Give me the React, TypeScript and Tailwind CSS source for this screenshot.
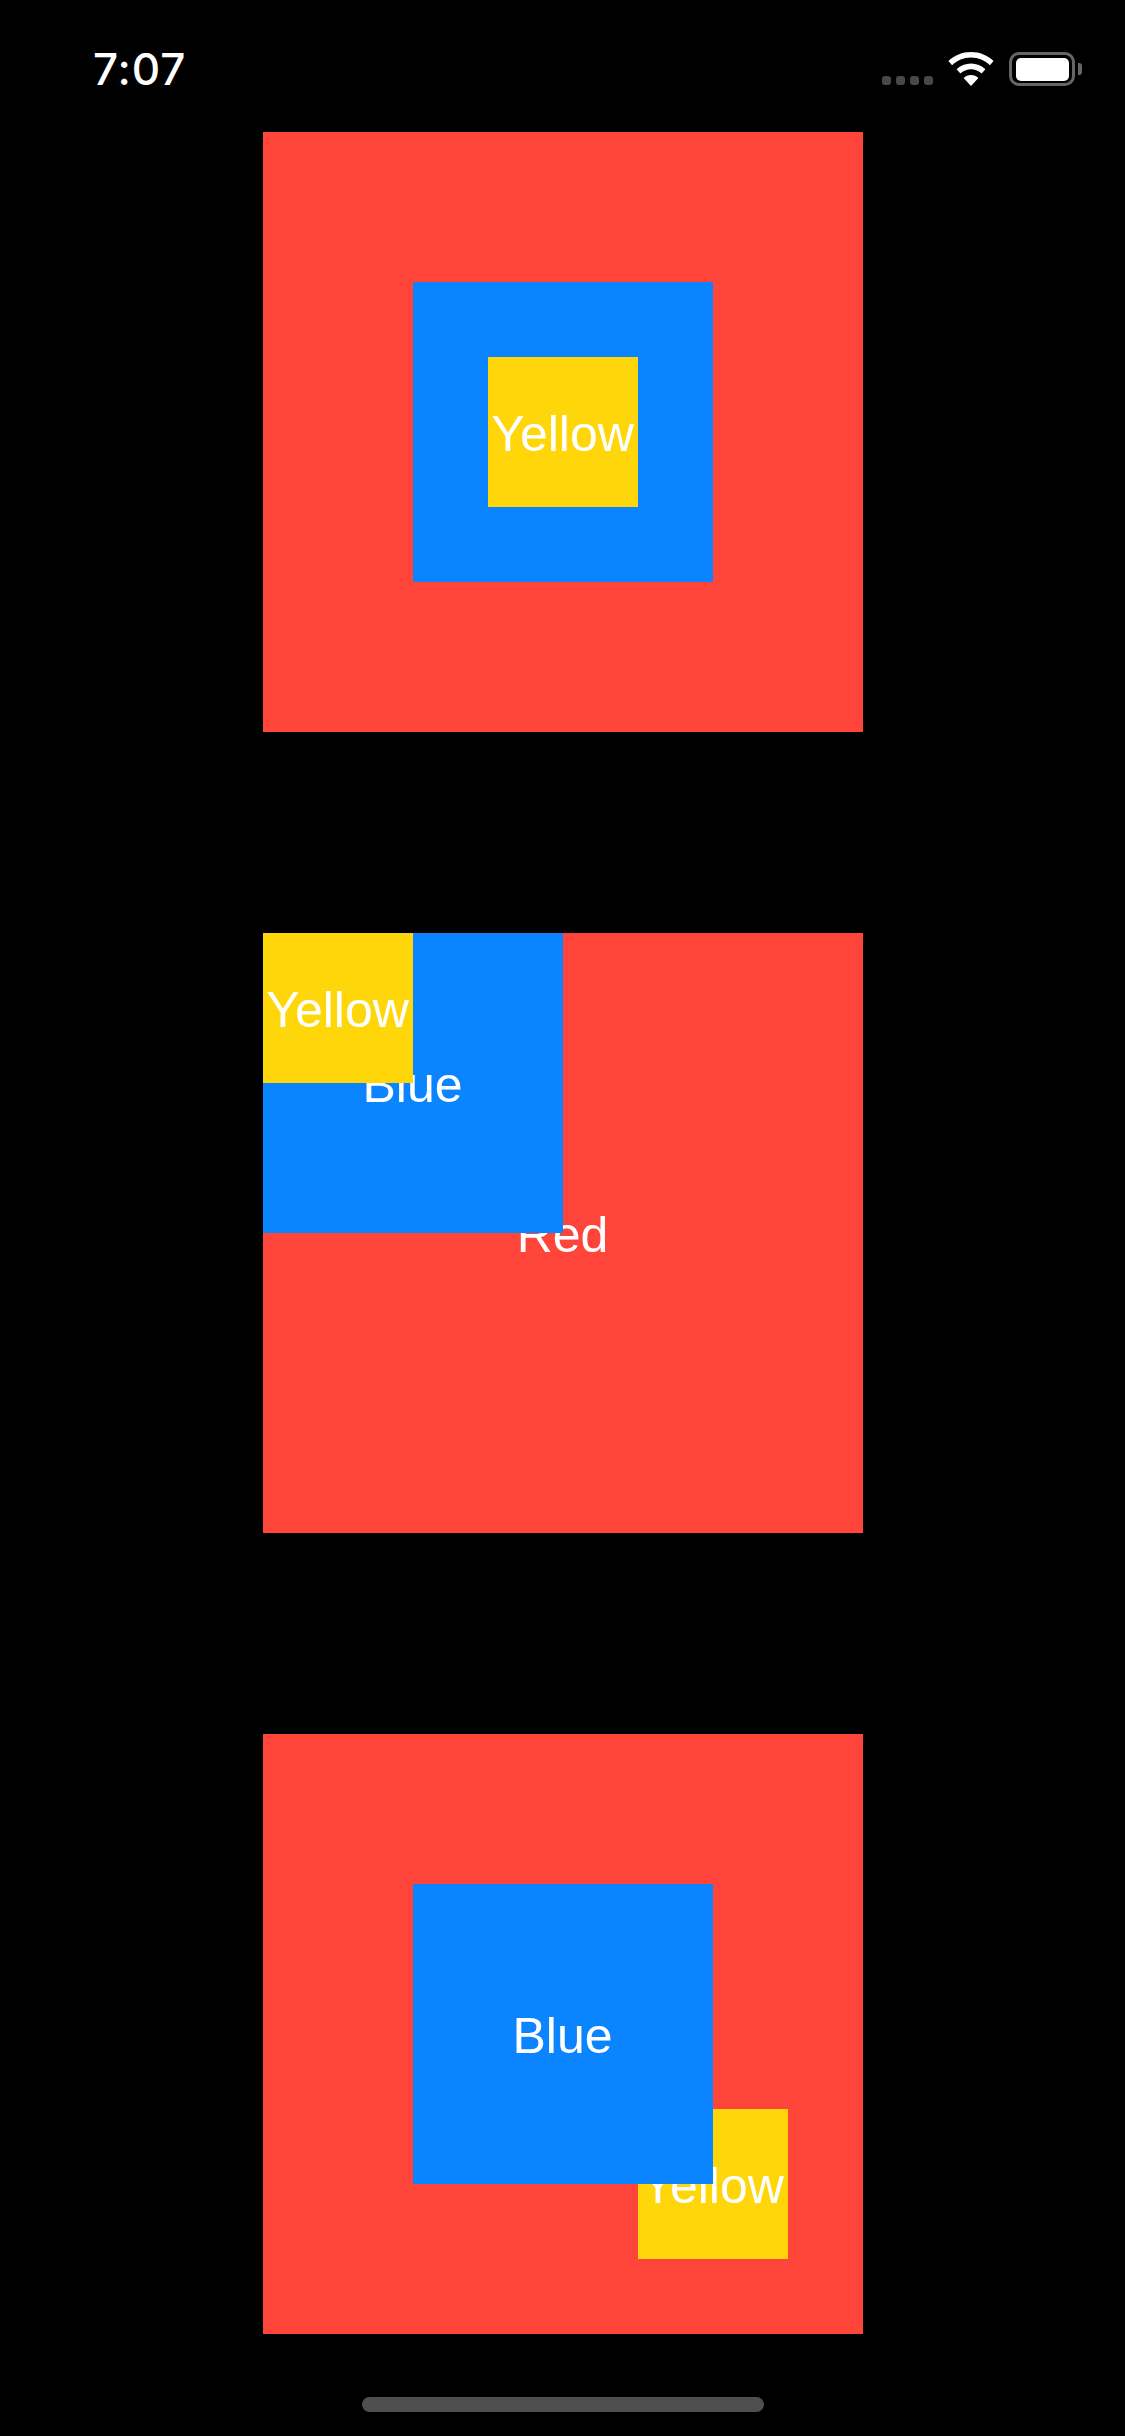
import React from "react";

const Label: React.FC<{ children: string }> = ({ children }) => (
  <span className="block pt-[3px] text-[50px] leading-none whitespace-nowrap text-white font-['Liberation_Sans',Arial,sans-serif]">
    {children}
  </span>
);

const Square: React.FC<{ className: string; children?: React.ReactNode }> = ({ className, children }) => (
  <div className={`flex items-center justify-center ${className}`}>{children}</div>
);

function Wifi() {
  return (
    <svg width="46" height="34" viewBox="0 0 46 34" fill="#fff">
      <path d="M23 0C14.200 0 6.300 3.400.4 9l3.700 4.300C9 8.500 15.700 5.600 23 5.600s14 2.900 18.900 7.700L45.600 9C39.700 3.400 31.800 0 23 0z" />
      <path d="M23 11.500c-5.600 0-10.600 2.200-14.400 5.700l3.800 4.300c2.700-2.600 6.500-4.200 10.600-4.200s7.900 1.600 10.600 4.200l3.800-4.300c-3.800-3.500-8.800-5.700-14.400-5.700z" />
      <path d="M23 23c-2.900 0-5.500 1.100-7.400 2.900L23 34l7.400-8.100C28.500 24.100 25.900 23 23 23z" />
    </svg>
  );
}

function Battery() {
  return (
    <div className="flex items-center gap-[3px]">
      <div className="flex h-[34px] w-[66px] items-center justify-center rounded-[10px] border-[3px] border-[#666666]">
        <div className="h-[23px] w-[53px] rounded-[5px] bg-white" />
      </div>
      <div className="h-[12px] w-[4px] rounded-r-[3px] bg-[#666666]" />
    </div>
  );
}

function StatusBar() {
  return (
    <div className="flex h-[132px] w-full items-start justify-between pt-[52px] pl-[93px] pr-[43px]">
      <span className="text-[44px] leading-[34px] font-medium tracking-[0.02em] text-white font-['Inter',sans-serif]">7:07</span>
      <div className="flex items-start">
        <div className="mt-[24px] mr-[15px] flex gap-[5px]">
          <div className="h-[9px] w-[9px] rounded-[3px] bg-[#484848]" />
          <div className="h-[9px] w-[9px] rounded-[3px] bg-[#484848]" />
          <div className="h-[9px] w-[9px] rounded-[3px] bg-[#484848]" />
          <div className="h-[9px] w-[9px] rounded-[3px] bg-[#484848]" />
        </div>
        <div className="mr-[15px]">
          <Wifi />
        </div>
        <Battery />
      </div>
    </div>
  );
}

export default function App() {
  return (
    <div className="flex h-[2436px] w-[1125px] flex-col items-center overflow-hidden bg-black">
      <StatusBar />
      <div className="flex flex-col gap-[201px]">
        <Square className="h-[600px] w-[600px] bg-[#ff453a]">
          <Square className="h-[300px] w-[300px] bg-[#0a84ff]">
            <Square className="h-[150px] w-[150px] bg-[#ffd60a]">
              <Label>Yellow</Label>
            </Square>
          </Square>
        </Square>

        <Square className="relative h-[600px] w-[600px] bg-[#ff453a]">
          <Label>Red</Label>
          <Square className="absolute top-0 left-0 h-[300px] w-[300px] bg-[#0a84ff]">
            <Label>Blue</Label>
            <Square className="absolute top-0 left-0 h-[150px] w-[150px] bg-[#ffd60a]">
              <Label>Yellow</Label>
            </Square>
          </Square>
        </Square>

        <Square className="relative h-[600px] w-[600px] bg-[#ff453a]">
          <Square className="absolute top-[375px] left-[375px] h-[150px] w-[150px] bg-[#ffd60a]">
            <Label>Yellow</Label>
          </Square>
          <Square className="relative h-[300px] w-[300px] bg-[#0a84ff]">
            <Label>Blue</Label>
          </Square>
        </Square>
      </div>
      <div className="mt-[63px] h-[15px] w-[402px] rounded-full bg-[#4f4f4f]" />
    </div>
  );
}
